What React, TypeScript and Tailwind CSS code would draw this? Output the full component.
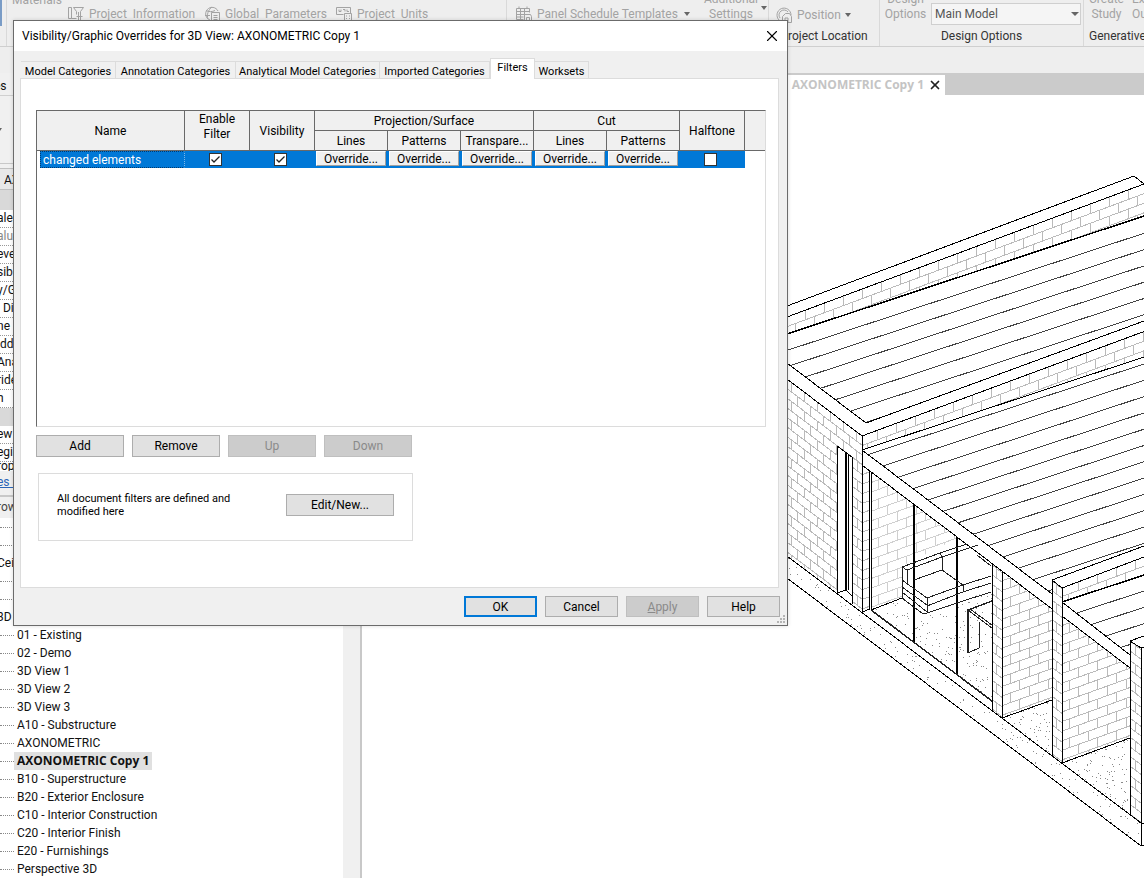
import type { ReactNode } from 'react'
import { X } from 'lucide-react'

const TABS = [
  { label: 'Model Categories', width: 'w-[95px]' },
  { label: 'Annotation Categories', width: 'w-[120px]' },
  { label: 'Analytical Model Categories', width: 'w-[144px]' },
  { label: 'Imported Categories', width: 'w-[110px]' },
  { label: 'Filters', width: 'w-[45px]' },
  { label: 'Worksets', width: 'w-[54px]' },
]

const PROPERTIES = ['ale', 'alue', 'evel', 'sibil', 'y/Gr', '  Dis', 'ne', 'idde', 'Ana', 'ride', 'h']

const VIEWS = [
  '01 - Existing',
  '02 - Demo',
  '3D View 1',
  '3D View 2',
  '3D View 3',
  'A10 - Substructure',
  'AXONOMETRIC',
  'AXONOMETRIC Copy 1',
  'B10 - Superstructure',
  'B20 - Exterior Enclosure',
  'C10 - Interior Construction',
  'C20 - Interior Finish',
  'E20 - Furnishings',
  'Perspective 3D',
]

type Point = [number, number]

const COURSE = 9.6

const toPoints = (points: Point[]) => points.map((p) => p.join(',')).join(' ')

/* ---------- 3D view ---------- */

function Region({ id, points, children }: { id: string; points: Point[]; children: ReactNode }) {
  return (
    <>
      <clipPath id={id}>
        <polygon points={toPoints(points)} />
      </clipPath>
      <g clipPath={`url(#${id})`}>{children}</g>
    </>
  )
}

type BrickProps = {
  id: string
  points: Point[]
  origin: Point
  slope: number
  brick?: number
  light?: boolean
}

// Courses run parallel to `slope`, joints are vertical and staggered.
function Bricks({ id, points, origin, slope, brick = 19, light }: BrickProps) {
  const xs = points.map((p) => p[0])
  const ys = points.map((p) => p[1])
  const x0 = Math.min(...xs)
  const x1 = Math.max(...xs)
  const reach = Math.abs(slope) * (x1 - x0) + 20
  const first = Math.floor((Math.min(...ys) - origin[1] - reach) / COURSE)
  const last = Math.ceil((Math.max(...ys) - origin[1] + reach) / COURSE)
  let d = ''
  for (let k = first; k <= last; k++) {
    const at = (x: number) => origin[1] + k * COURSE + (x - origin[0]) * slope
    d += `M${x0} ${at(x0)}L${x1} ${at(x1)}`
    const shift = k % 2 === 0 ? 0 : brick / 2
    const start = origin[0] + shift + Math.floor((x0 - origin[0]) / brick) * brick
    for (let x = start; x <= x1; x += brick) {
      d += `M${x} ${at(x)}v${COURSE}`
    }
  }
  return (
    <Region id={id} points={points}>
      <path d={d} stroke={light ? '#cfcfcf' : '#bababa'} />
    </Region>
  )
}

function Planks({ id, points, right, count }: { id: string; points: Point[]; right: number; count: number }) {
  let d = ''
  for (let k = 0; k < count; k++) {
    const y = right + k * 16.3
    d += `M1144 ${y}L744 ${y + 400 * 0.328}`
  }
  return (
    <Region id={id} points={points}>
      <path d={d} stroke="#444" />
    </Region>
  )
}

function Stipple({ id, points, count }: { id: string; points: Point[]; count: number }) {
  const xs = points.map((p) => p[0])
  const ys = points.map((p) => p[1])
  const x0 = Math.min(...xs)
  const y0 = Math.min(...ys)
  const w = Math.max(...xs) - x0
  const h = Math.max(...ys) - y0
  let seed = 7
  const next = () => {
    seed = (seed * 16807) % 2147483647
    return seed / 2147483647
  }
  let d = ''
  for (let i = 0; i < count; i++) {
    d += `M${Math.round(x0 + next() * w)} ${Math.round(y0 + next() * h)}h1v1h-1z`
  }
  return (
    <Region id={id} points={points}>
      <path d={d} fill="#8a8a8a" stroke="none" />
    </Region>
  )
}

function Axonometric() {
  return (
    <svg
      viewBox="362 95 782 783"
      className="h-[783px] w-[782px] shrink-0"
      fill="none"
      stroke="#000"
      strokeWidth="1"
      shapeRendering="crispEdges"
      role="img"
      aria-label="Axonometric building view"
    >
      {/* decks */}
      <Planks id="deck1" points={[[787, 334], [1144, 216], [1144, 321], [866, 423], [787, 363]]} right={233.3} count={7} />
      <Planks id="deck2" points={[[862, 450], [1144, 357], [1144, 546], [1052, 580], [1052, 594]]} right={364} count={13} />
      <Planks id="deck3" points={[[1062, 603], [1144, 576], [1144, 637], [1130, 641], [1130, 655]]} right={591} count={5} />

      {/* masonry */}
      <Bricks id="b1" points={[[787, 317], [1144, 184], [1144, 216], [787, 334]]} origin={[1128, 190]} slope={-0.3725} />
      <Bricks id="b2" points={[[862, 436], [1144, 331], [1144, 357], [862, 450]]} origin={[1124, 339]} slope={-0.37} />
      <Bricks id="b3" points={[[787, 379], [862, 436], [862, 466], [837, 446], [837, 593], [787, 556]]} origin={[791, 382]} slope={0.755} brick={13} />
      <Bricks id="b4" points={[[852, 457], [862, 465], [862, 612], [852, 604]]} origin={[857, 461]} slope={0.755} brick={13} />
      <Bricks id="b5" points={[[862, 465], [869, 470], [869, 610], [862, 612]]} origin={[862, 465]} slope={-0.36} />
      <Bricks id="b6" points={[[872, 471], [958, 538], [902, 566], [902, 598], [872, 610]]} origin={[878, 480]} slope={-0.36} light />
      <Bricks id="b7" points={[[992, 564], [1002, 572], [1002, 718], [992, 711]]} origin={[996, 568]} slope={0.755} brick={13} />
      <Bricks id="b8" points={[[1002, 572], [1052, 609], [1052, 700], [1002, 718]]} origin={[1010, 578]} slope={-0.36} />
      <Bricks id="b9" points={[[1052, 580], [1062, 588], [1062, 763], [1052, 756]]} origin={[1056, 584]} slope={0.755} brick={13} />
      <Bricks id="b10" points={[[1062, 588], [1144, 557], [1144, 575], [1062, 602]]} origin={[1078, 581]} slope={-0.37} />
      <Bricks id="b11" points={[[1062, 616], [1130, 668], [1130, 738], [1062, 763]]} origin={[1069, 623]} slope={-0.36} />
      <Bricks id="b12" points={[[1130, 641], [1141, 648], [1141, 823], [1130, 816]]} origin={[1135, 645]} slope={0.755} brick={13} />

      {/* concrete */}
      <Stipple id="s1" points={[[787, 556], [1141, 823], [1141, 846], [787, 578]]} count={1500} />
      <Stipple id="s2" points={[[872, 610], [902, 598], [926, 614], [992, 590], [992, 701]]} count={300} />
      <Stipple id="s3" points={[[1002, 718], [1052, 700], [1052, 756]]} count={80} />
      <Stipple id="s4" points={[[1062, 763], [1130, 738], [1130, 816]]} count={160} />

      {/* roof edges */}
      <path d="M787 306L1134 176L1144 184M787 317L1144 184" />
      <path d="M787 334L1144 216" strokeWidth="1.5" />
      <path d="M787 363L866 423L1144 321M787 379L862 436L1144 331.5M862 450L1144 357" />
      <path d="M862 450L1052 594M1062 602L1130 655M862 465L1052 609M1062 616L1130 668" />
      <path d="M1052 756V580L1144 546M1052 580L1062 588L1144 557M1062 588V763" />
      <path d="M1062 602L1144 575" strokeWidth="1.5" />
      <path d="M1130 816V641L1144 636M1130 641L1141 648L1144 647M1141 648V846L1144 845M1141 823H1144" />

      {/* openings and glazing */}
      <path d="M862 436V612M837 446V593M837 446L852 457V604M837 593L846 590L852 596M862 612L870 609" />
      <path d="M846 453V591M914 505V642M957 537V674" strokeWidth="2" />
      <path d="M848 455V590M869 470V610M871 472V610" />
      <path d="M871 610L992 701" strokeWidth="1.5" stroke="#222" />
      <path d="M871 610L902 598" />
      <path d="M992 564V711M1002 572V718M1002 718L1052 700M1062 763L1130 738" />

      {/* slab */}
      <path d="M787 556L1141 823M787 578L1141 846" />

      {/* sofa */}
      <g stroke="#222">
        <path d="M902 598V567L940 553L967 544M902 567L907 570V583M907 570L942 557L978 545M940 553L942 557V570M914 580L942 570L963 585V592" />
        <path d="M902 580L927 598V613M927 598L963 585L991 576M927 606L963 592L991 583M902 587L927 605M902 592L927 612M927 613L957 603L991 592M902 598L922 613L927 613" />
        <path d="M977 555L991 566" />
      </g>

      {/* desk */}
      <g stroke="#222">
        <path d="M968 653L979 648V622" />
        <path d="M968 653V610L992 601" strokeWidth="1.5" />
        <path d="M968 610L992 628M970 609L992 625" />
      </g>
    </svg>
  )
}

/* ---------- ribbon ---------- */

function Caret() {
  return (
    <svg viewBox="0 0 6 4" className="h-1 w-1.5 shrink-0" fill="#666" aria-hidden="true">
      <path d="M0 0h6L3 4z" />
    </svg>
  )
}

function RibbonIcon({ children }: { children: ReactNode }) {
  return (
    <svg viewBox="0 0 17 16" className="h-4 w-[17px] shrink-0" fill="none" stroke="#a3a3a3" aria-hidden="true">
      {children}
    </svg>
  )
}

function ProjectInfoIcon() {
  return (
    <RibbonIcon>
      <path d="M.5 1.5h3v11h-3zM3.5 12.5h5M5.5 1.5h10l-3 4v3M5.5 1.5l3 4v3M10.5 6v9M12.5 8v7M8.5 10.5h6M8 14.5h7" />
    </RibbonIcon>
  )
}

function GlobeIcon() {
  return (
    <RibbonIcon>
      <path d="M6 14A6.500 6.500 0 1 1 14 5M4 13C2.500 9 4 4 8 1M2 4.500c3 1.500 6 1.500 9 0M1 9.500h5" />
      <path d="M7.500 6.500h8v9h-8zM9.500 9.500h4M9.500 11.500h4M9.500 13.500h4" />
    </RibbonIcon>
  )
}

function UnitsIcon() {
  return (
    <RibbonIcon>
      <path d="M.5 1.500h14v6M.5 1.500v7h7M3 3.500v2h2v-2M7 3.500h2v2M11 3.500v2h2" />
      <path d="M8.500 7.500h7v8h-7zM10 10h1M13 10h1M10 12.500h1M13 12.500h1" />
    </RibbonIcon>
  )
}

function ScheduleIcon() {
  return (
    <RibbonIcon>
      <path d="M.5 2.500h13v4M.5 2.500v11h7M.5 5.500h13M.5 8.500h8M.5 11h7M4.500 2.500v11M8.500 2.500v6M3 .5v2M11 .5v2" />
      <path d="M8.500 15.500v-7h6l1 2v5M10.500 15.500v-4h3v4" />
    </RibbonIcon>
  )
}

function PositionIcon() {
  return (
    <RibbonIcon>
      <path d="M3 13A7 7 0 1 1 15 8M4 11a5 5 0 0 1 8-6" />
      <path d="M6.500 15.500v-6l3-3h4l2 3v6zM9 15v-4h3v4" />
    </RibbonIcon>
  )
}

function Ribbon() {
  return (
    <header className="flex h-[47px] shrink-0 border-b border-[#cfcfcf] text-[12px] leading-4 whitespace-pre text-[#a3a3a3]">
      <div className="h-[26px] w-[2px] shrink-0 bg-[#7a9cc6]" />
      <div className="w-[5px] shrink-0 border-r border-[#d9d9d9]" />
      <div className="flex w-[500px] shrink-0 items-start border-r border-[#d9d9d9] pl-[5px]">
        <div className="-mt-2 w-14 shrink-0">Materials</div>
        <div className="flex items-center gap-1 pt-1.5">
          <ProjectInfoIcon />
          <span className="w-[111px]">Project  Information</span>
          <GlobeIcon />
          <span className="w-[107px]">Global  Parameters</span>
          <UnitsIcon />
          <span>Project  Units</span>
        </div>
      </div>
      <div className="flex w-[262px] shrink-0 items-start border-r border-[#d9d9d9] pl-[9px]">
        <div className="flex w-[185px] shrink-0 items-center gap-1 pt-1.5">
          <ScheduleIcon />
          <span className="w-[143px]">Panel Schedule Templates</span>
          <Caret />
        </div>
        <div className="-mt-2 w-[60px] shrink-0 text-center leading-[15px]">
          Additional
          <br />
          Settings
        </div>
        <div className="pt-1.5">
          <Caret />
        </div>
      </div>
      <div className="flex w-[111px] shrink-0 flex-col border-r border-[#d9d9d9]">
        <div className="flex h-7 items-center gap-1 pt-0.5 pl-[7px]">
          <PositionIcon />
          <span>Position</span>
          <Caret />
        </div>
        <div className="text-center text-[#333]">Project Location</div>
      </div>
      <div className="flex w-[204px] shrink-0 flex-col border-r border-[#d9d9d9]">
        <div className="flex h-7 items-start gap-1 pl-[4px]">
          <label htmlFor="design-option" className="-mt-2 w-[43px] shrink-0 text-center leading-[15px]">
            Design
            <br />
            Options
          </label>
          <div className="grid w-[150px] pt-[3px]">
            <select
              id="design-option"
              className="col-start-1 row-start-1 h-[22px] appearance-none rounded-none border border-[#cfcfcf] bg-[#f5f5f5] pl-[3px] text-[12px] text-[#555]"
            >
              <option>Main Model</option>
            </select>
            <svg viewBox="0 0 8 4" className="pointer-events-none col-start-1 row-start-1 mr-0.5 h-1 w-2 self-center justify-self-end" fill="#666" aria-hidden="true">
              <path d="M0 0h8L4 4z" />
            </svg>
          </div>
        </div>
        <div className="text-center text-[#333]">Design Options</div>
      </div>
      <div className="min-w-0 flex-1 overflow-hidden pl-[5px]">
        <div className="-mt-2 flex h-9 gap-2 leading-[15px]">
          <div className="text-center">
            Create
            <br />
            Study
          </div>
          <div>
            Explore
            <br />
            Outcomes
          </div>
        </div>
        <div className="text-[#333]">Generative Design</div>
      </div>
    </header>
  )
}

/* ---------- left palettes ---------- */

function Sidebar() {
  return (
    <aside className="flex w-[362px] shrink-0 overflow-hidden border-r-2 border-[#c8c8c8] bg-white text-[12px] text-[#111]">
      <div className="min-w-0 flex-1 -indent-[3px]">
        <div className="h-[23px] border-b border-[#d0d0d0] bg-[#f0f0f0] -indent-[6px] leading-[26px]">es</div>
        <div className="flex h-[68px] items-center border-b border-[#c8c8c8] bg-[#f0f0f0]">
          <svg viewBox="0 0 2 4" className="h-1 w-0.5" fill="#666" aria-hidden="true">
            <path d="M0 0h2L0 3z" />
          </svg>
        </div>
        <div className="h-1 bg-[#f0f0f0]" />
        <div className="h-[22px] border-y border-[#c0c0c0] bg-[#e8e8e8] pl-[7px] leading-[22px]">AXONOMETRIC</div>
        <div className="h-5 bg-[#d9d9d9]" />
        {PROPERTIES.map((name) => (
          <div
            key={name}
            className={`h-[18px] border-b border-dotted border-[#999] leading-4 whitespace-pre ${name === 'alue' ? 'text-[#888]' : ''}`}
          >
            {name}
          </div>
        ))}
        <div className="h-[18px] bg-[#d9d9d9]" />
        <div className="h-[18px] border-b border-dotted border-[#999] leading-4">ew</div>
        <div className="h-[18px] border-b border-dotted border-[#999] leading-4">egion</div>
        <div className="h-[9px] overflow-hidden leading-[9px]">rop</div>
        <div className="h-[26px] border-b-2 border-[#c8c8c8] bg-[#f0f0f0] leading-[22px]">
          <a href="#help" className="text-[#2a66b8] underline">es help</a>
        </div>
        <div className="h-[21px] bg-[#f0f0f0] leading-[21px] text-[#444]">rowser</div>
        {['', '', 'Ceiling Plans', '', '', '3D Views'].map((label, i) => (
          <div key={i} className="flex h-[18px] items-center">
            {label || <span className="w-3.5 border-t border-dotted border-[#888]" />}
          </div>
        ))}
        <ul className="indent-0">
          {VIEWS.map((view) => (
            <li key={view} className="flex h-[18px] items-center">
              <span className="w-3.5 border-t border-dotted border-[#888]" />
              <a
                href="#view"
                className={`px-[3px] leading-[18px] ${
                  view === 'AXONOMETRIC Copy 1' ? "bg-[#e0e0e0] font-['Open_Sans',sans-serif] font-bold" : ''
                }`}
              >
                {view}
              </a>
            </li>
          ))}
        </ul>
      </div>
      <div className="w-[17px] shrink-0 bg-[#f0f0f0]" />
    </aside>
  )
}

/* ---------- dialog ---------- */

type PushButtonProps = { className?: string; primary?: boolean; disabled?: boolean; children: ReactNode }

function PushButton({ className = '', primary, disabled, children }: PushButtonProps) {
  return (
    <button
      type="button"
      disabled={disabled}
      className={`flex items-center justify-center bg-[#e1e1e1] disabled:border-[#bfbfbf] disabled:bg-[#cccccc] disabled:text-[#8a8a8a] ${
        primary ? 'border-2 border-[#0078d7]' : 'border border-[#adadad]'
      } ${className}`}
    >
      {children}
    </button>
  )
}

const TH = 'border-r border-b border-[#696969] p-0 font-normal'

function CheckCell({ label, checked }: { label: string; checked?: boolean }) {
  return (
    <td className="p-0 pr-1">
      <div className="grid h-[17px] place-items-center">
        <input
          type="checkbox"
          aria-label={label}
          defaultChecked={checked}
          className="peer col-start-1 row-start-1 h-[13px] w-[13px] appearance-none border border-[#333] bg-white"
        />
        <svg
          viewBox="0 0 13 13"
          className="pointer-events-none col-start-1 row-start-1 hidden h-[13px] w-[13px] peer-checked:block"
          fill="none"
          stroke="#222"
          strokeWidth="1.3"
          aria-hidden="true"
        >
          <path d="M2.500 6.500l2.500 2.500l5.500-5.500" />
        </svg>
      </div>
    </td>
  )
}

function FilterTable() {
  return (
    <div className="h-[317px] border border-t-[#696969] border-r-[#dcdcdc] border-b-[#dcdcdc] border-l-[#696969]">
      <table className="w-full table-fixed border-separate border-spacing-0">
        <colgroup>
          <col className="w-[148px]" />
          <col className="w-[65px]" />
          <col className="w-[65px]" />
          <col className="w-[73px]" />
          <col className="w-[73px]" />
          <col className="w-[73px]" />
          <col className="w-[73px]" />
          <col className="w-[73px]" />
          <col className="w-[65px]" />
          <col />
        </colgroup>
        <thead className="bg-[#f0f0f0] leading-[15px]">
          <tr className="h-5">
            <th rowSpan={2} className={`${TH} pt-0.5`}>Name</th>
            <th rowSpan={2} className={`${TH} pb-2`}>Enable<br />Filter</th>
            <th rowSpan={2} className={`${TH} pt-0.5`}>Visibility</th>
            <th colSpan={3} className={`${TH} pt-0.5`}>Projection/Surface</th>
            <th colSpan={2} className={`${TH} pt-0.5`}>Cut</th>
            <th rowSpan={2} className={`${TH} pt-0.5`}>Halftone</th>
            <td rowSpan={2} className="border-b border-[#696969]" />
          </tr>
          <tr className="h-5">
            <th className={`${TH} pt-0.5`}>Lines</th>
            <th className={`${TH} pt-0.5`}>Patterns</th>
            <th className={`${TH} pt-0.5`}>Transpare...</th>
            <th className={`${TH} pt-0.5`}>Lines</th>
            <th className={`${TH} pt-0.5`}>Patterns</th>
          </tr>
        </thead>
        <tbody>
          <tr className="h-[17px] bg-[#0078d7]">
            <td className="border-l-[3px] border-white p-0">
              <div className="h-[17px] border border-dotted border-[#003a70] border-r-[#7db7e8] pl-0.5 leading-4 text-white">
                changed elements
              </div>
            </td>
            <CheckCell label="Enable Filter" checked />
            <CheckCell label="Visibility" checked />
            {['Surface lines', 'Surface patterns', 'Transparency', 'Cut lines', 'Cut patterns'].map((label) => (
              <td key={label} className="p-0 align-top">
                <button
                  type="button"
                  aria-label={label}
                  className="mx-px block h-[15px] w-[70px] border border-t-white border-r-[#a0a0a0] border-b-[#a0a0a0] border-l-white bg-[#f0f0f0] leading-[14px]"
                >
                  Override...
                </button>
              </td>
            ))}
            <CheckCell label="Halftone" />
            <td className="bg-white p-0" />
          </tr>
        </tbody>
      </table>
    </div>
  )
}

function OverridesDialog() {
  return (
    <section
      role="dialog"
      aria-labelledby="dialog-title"
      className="absolute top-5 left-[13px] w-[775px] border border-[#6b6b6b] bg-[#f0f0f0] text-[12px] text-black shadow-[0_0_4px_rgba(0,0,0,0.15)]"
    >
      <div className="flex h-[30px] items-center justify-between bg-white pr-1.5 pl-2">
        <h1 id="dialog-title">Visibility/Graphic Overrides for 3D View: AXONOMETRIC Copy 1</h1>
        <button type="button" aria-label="Close">
          <X className="h-[18px] w-[18px]" strokeWidth={1.5} />
        </button>
      </div>

      <div className="pt-[7px] pr-2 pl-1.5">
        <div role="tablist" className="flex h-5 items-end pl-px text-[11px]">
          {TABS.map(({ label, width }) => (
            <button
              key={label}
              type="button"
              role="tab"
              aria-selected={label === 'Filters'}
              className={`shrink-0 border border-b-0 border-[#dcdcdc] whitespace-nowrap ${width} ${
                label === 'Filters' ? '-mb-px h-[21px] bg-white pb-0.5' : 'h-[17px] border-l-0 pt-0.5'
              }`}
            >
              {label}
            </button>
          ))}
        </div>
        <div className="h-[510px] border border-[#dcdcdc] bg-white pt-[31px] pr-3 pl-[15px]">
          <FilterTable />
          <div className="flex gap-2 pt-2">
            <PushButton className="h-[22px] w-[88px]">Add</PushButton>
            <PushButton className="h-[22px] w-[88px]">Remove</PushButton>
            <PushButton className="h-[22px] w-[88px]" disabled>Up</PushButton>
            <PushButton className="h-[22px] w-[88px]" disabled>Down</PushButton>
          </div>
          <div className="mt-4 ml-0.5 flex h-[68px] w-[375px] items-start justify-between border border-[#dcdcdc] px-[18px]">
            <p className="pt-[18px] text-[11px] leading-[13px]">
              All document filters are defined and
              <br />
              modified here
            </p>
            <PushButton className="mt-5 h-[22px] w-[108px]">Edit/New...</PushButton>
          </div>
        </div>
      </div>

      <div className="flex justify-end gap-2 pt-2 pr-[7px] pb-2">
        <PushButton className="h-[21px] w-[73px]" primary>OK</PushButton>
        <PushButton className="h-[21px] w-[73px]">Cancel</PushButton>
        <PushButton className="h-[21px] w-[73px]" disabled>
          <span className="underline">A</span>pply
        </PushButton>
        <PushButton className="h-[21px] w-[73px]">Help</PushButton>
      </div>
      <svg viewBox="0 0 8 8" className="absolute right-0.5 bottom-0.5 h-2 w-2" fill="#b4b4b4" aria-hidden="true">
        <path d="M6 0h2v2H6zM3 3h2v2H3zM6 3h2v2H6zM0 6h2v2H0zM3 6h2v2H3zM6 6h2v2H6z" />
      </svg>
    </section>
  )
}

export default function App() {
  return (
    <div className="relative flex h-screen flex-col overflow-hidden bg-[#eeeeee] font-[Roboto,sans-serif]">
      <Ribbon />
      <div className="h-[26px] shrink-0" />
      <div className="flex min-h-0 flex-1">
        <Sidebar />
        <main className="flex min-w-0 flex-1 flex-col overflow-hidden bg-white">
          <div className="flex h-[22px] shrink-0 border-t-2 border-[#cbcbcb] bg-[#cbcbcb]">
            <div className="flex w-[583px] shrink-0 items-center justify-end gap-1 bg-white pr-[3px] font-['Open_Sans',sans-serif] text-[12px] font-bold text-[#c4c4c4]">
              AXONOMETRIC Copy 1
              <button type="button" aria-label="Close view">
                <X className="h-3.5 w-3.5 text-[#222]" strokeWidth={3} />
              </button>
            </div>
          </div>
          <Axonometric />
        </main>
      </div>
      <OverridesDialog />
    </div>
  )
}
